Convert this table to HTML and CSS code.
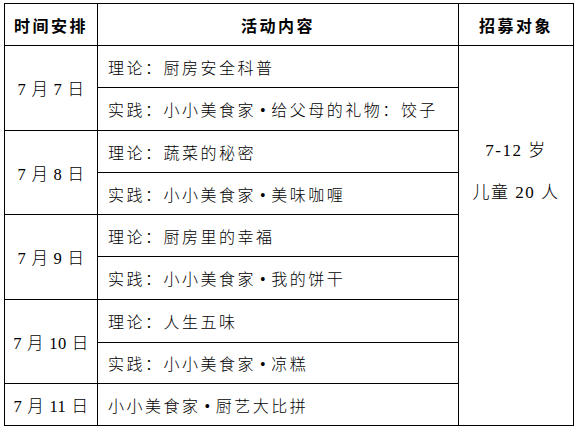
FILE: index.html
```html
<!DOCTYPE html>
<html lang="zh-CN">
<head>
<meta charset="utf-8">
<link rel="stylesheet" href="styles.css">
</head>
<body>
<table class="plan">
  <colgroup>
    <col class="c-date">
    <col class="c-act">
    <col class="c-who">
  </colgroup>
  <tr class="r-head">
    <th>时间安排</th>
    <th>活动内容</th>
    <th>招募对象</th>
  </tr>
  <tr class="r1">
    <td class="date" rowspan="2">7 月 7 日</td>
    <td class="act">理论：厨房安全科普</td>
    <td class="who" rowspan="9"><div>7-12 岁</div><div>儿童 20 人</div></td>
  </tr>
  <tr class="r2"><td class="act">实践：小小美食家<span class="dot">•</span>给父母的礼物：饺子</td></tr>
  <tr class="r3">
    <td class="date" rowspan="2">7 月 8 日</td>
    <td class="act">理论：蔬菜的秘密</td>
  </tr>
  <tr class="r4"><td class="act">实践：小小美食家<span class="dot">•</span>美味咖喱</td></tr>
  <tr class="r5">
    <td class="date" rowspan="2">7 月 9 日</td>
    <td class="act">理论：厨房里的幸福</td>
  </tr>
  <tr class="r6"><td class="act">实践：小小美食家<span class="dot">•</span>我的饼干</td></tr>
  <tr class="r7">
    <td class="date" rowspan="2">7 月 10 日</td>
    <td class="act">理论：人生五味</td>
  </tr>
  <tr class="r8"><td class="act">实践：小小美食家<span class="dot">•</span>凉糕</td></tr>
  <tr class="r9">
    <td class="date">7 月 11 日</td>
    <td class="act">小小美食家<span class="dot">•</span>厨艺大比拼</td>
  </tr>
</table>
</body>
</html>
```
FILE: styles.css
```css
html, body {
  margin: 0;
  padding: 0;
  background: #fff;
}
body {
  padding: 3px 0 0 4px;
  font-family: "Liberation Serif", "Noto Sans CJK SC", serif;
  color: #000;
}
.plan {
  border-collapse: collapse;
  table-layout: fixed;
  width: 569px;
}
.c-date { width: 93px; }
.c-act { width: 361px; }
.c-who { width: 115px; }
.plan th, .plan td {
  border: 1.5px solid #000;
  padding: 0;
  font-size: 16px;
  font-weight: 300;
  letter-spacing: 2.5px;
  white-space: nowrap;
}
.plan th {
  font-weight: bold;
  text-align: center;
}
.r-head { height: 42px; }
.r1, .r3, .r4, .r5, .r9 { height: 42px; }
.r2, .r6, .r7 { height: 43px; }
.r8 { height: 41px; }
.date {
  text-align: center;
  letter-spacing: 0.5px !important;
  word-spacing: 0.5px;
  font-size: 16.5px !important;
}
.act {
  padding-left: 10px !important;
  text-align: left;
}
.dot {
  padding: 0 3px 0 4px;
}
.who {
  vertical-align: top;
  text-align: center;
  padding-top: 84px !important;
  line-height: 42px;
  letter-spacing: 1.5px !important;
  font-size: 17px !important;
}
```
